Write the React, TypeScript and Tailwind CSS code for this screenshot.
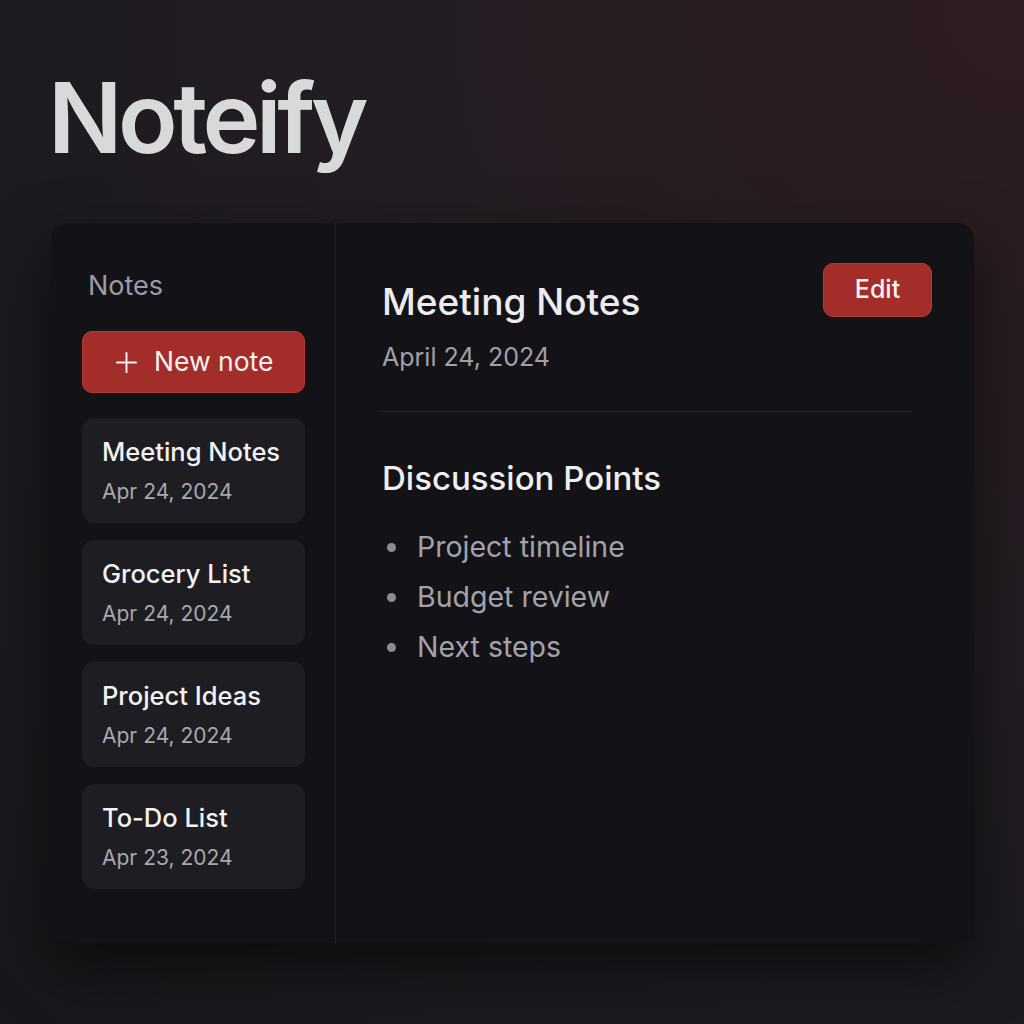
import { Plus } from 'lucide-react';

const notes = [
  { title: 'Meeting Notes', date: 'Apr 24, 2024' },
  { title: 'Grocery List', date: 'Apr 24, 2024' },
  { title: 'Project Ideas', date: 'Apr 24, 2024' },
  { title: 'To-Do List', date: 'Apr 23, 2024' },
];

const points = ['Project timeline', 'Budget review', 'Next steps'];

export default function App() {
  return (
    <div
      className="min-h-[1024px] w-[1024px] bg-[radial-gradient(ellipse_at_top_right,#2e1c21_0%,#221d23_45%,#18181c_100%)] px-[51px] pt-[62px] text-white"
      style={{ fontFamily: 'Inter, "Noto Sans", sans-serif' }}
    >
      {/* Brand */}
      <h1 className="-ml-[3px] text-[98px] font-semibold leading-[112px] tracking-[-0.045em] text-[#d9d9db]">
        Noteify
      </h1>

      {/* App window */}
      <div className="mt-[49px] flex h-[720px] w-[923px] overflow-hidden rounded-2xl bg-[#131317] shadow-[0_24px_60px_rgba(0,0,0,0.55)]">
        {/* Sidebar */}
        <aside className="flex w-[285px] shrink-0 flex-col border-r border-[#222228] pl-[31px] pt-[47px]">
          <p className="pl-[6px] text-[27px] leading-8 text-[#9b9ba4]">Notes</p>
          <button className="mt-[29px] flex h-[62px] w-[223px] items-center gap-[11px] rounded-[10px] border border-[#b63b34] bg-[#a32d29] pl-[27px] text-[26.5px] text-[#f3f0ef]">
            <Plus className="h-[33px] w-[33px]" strokeWidth={1.4} />
            New note
          </button>
          <div className="mt-[25px] flex flex-col gap-[17px]">
            {notes.map((n) => (
              <div
                key={n.title}
                className="flex h-[105px] w-[223px] flex-col justify-center rounded-xl bg-[#1e1e22] pl-[20px]"
              >
                <p className="text-[25.5px] font-medium leading-8 text-[#f2f2f4]">{n.title}</p>
                <p className="mt-[10px] text-[21px] leading-7 text-[#a7a7ae]">{n.date}</p>
              </div>
            ))}
          </div>
        </aside>

        {/* Editor */}
        <main className="flex-1 pl-[46px] pr-[42px] pt-[40px]">
          <div className="flex items-start justify-between">
            <div className="pt-[17px]">
              <h2 className="text-[37px] font-medium leading-[44px] text-[#ececee]">Meeting Notes</h2>
              <p className="mt-[17px] text-[25px] leading-8 text-[#a0a0a8]">April 24, 2024</p>
            </div>
            <button className="flex h-[54px] w-[109px] items-center justify-center rounded-[10px] border border-[#b63b34] bg-[#a32d29] text-[25px] font-medium text-[#f5f1f0]">
              Edit
            </button>
          </div>
          <div className="-ml-[4px] mr-[20px] mt-[38px] border-t border-[#222228]" />
          <h3 className="mt-[47px] text-[33px] font-medium leading-[38px] text-[#efeff1]">Discussion Points</h3>
          <ul className="mt-[25px]">
            {points.map((p) => (
              <li key={p} className="flex h-[50px] items-center text-[28.5px] text-[#a2a2ab]">
                <span className="ml-[5px] mr-[21px] h-[9px] w-[9px] rounded-full bg-[#8c8c95]" />
                {p}
              </li>
            ))}
          </ul>
        </main>
      </div>
    </div>
  );
}
